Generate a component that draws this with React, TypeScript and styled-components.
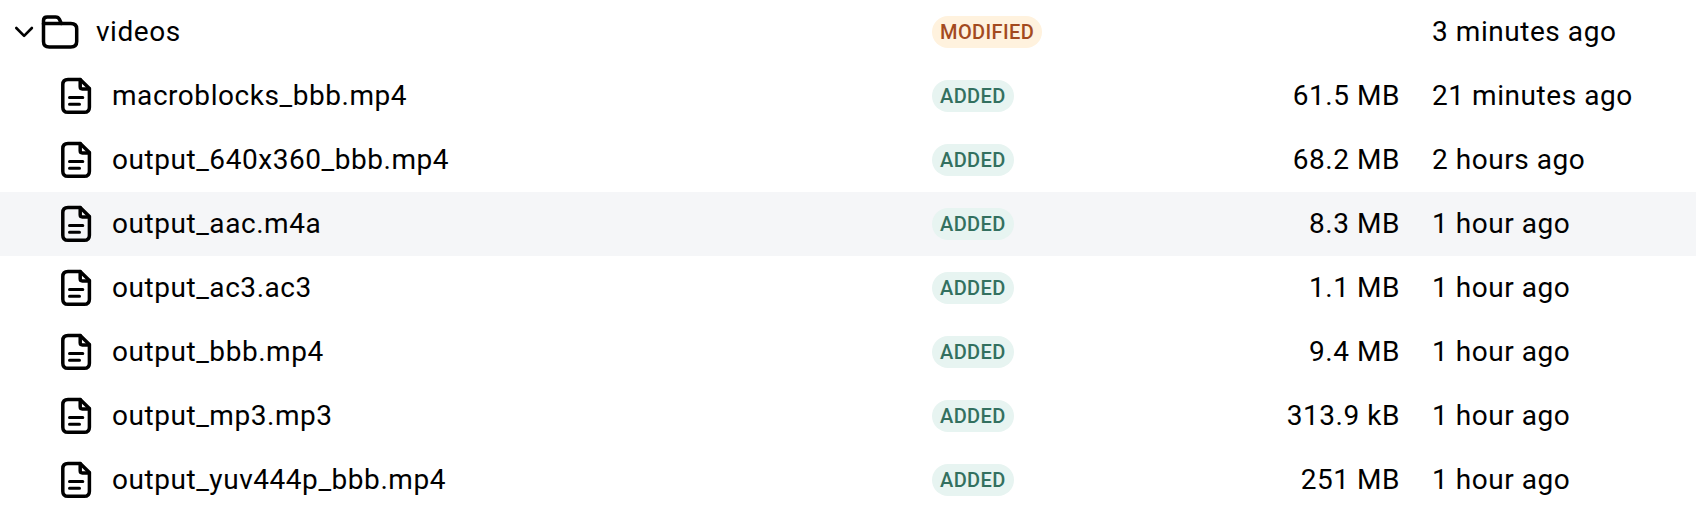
import React from "react";
import styled, { createGlobalStyle, css } from "styled-components";

const GlobalStyle = createGlobalStyle`
  html, body { margin: 0; padding: 0; background: #fff; }
`;

const Tree = styled.main`
  width: 100%;
  height: 516px;
  overflow: hidden;
  color: #000;
  background: #fff;
  font: 400 28px/64px Roboto, sans-serif;
  letter-spacing: 0.55px;
`;

const Row = styled.div<{ $active?: boolean }>`
  display: grid;
  grid-template-columns: 932px 268px 200px 1fr;
  height: 64px;
  align-items: center;
  white-space: nowrap;
  background: ${(p) => (p.$active ? "#f5f6f8" : "transparent")};
`;

const NameCell = styled.div<{ $nested?: boolean }>`
  display: flex;
  align-items: center;
  height: 64px;
  padding-left: ${(p) => (p.$nested ? 56 : 8)}px;
`;

const Icon = styled.svg<{ $weight?: number }>`
  flex: none;
  display: block;
  fill: none;
  stroke: #000;
  stroke-width: ${(p) => p.$weight ?? 3.5};
  stroke-linecap: round;
  stroke-linejoin: round;
`;

const Label = styled.span`
  margin-left: 16px;
`;

const StatusCell = styled.div`
  display: flex;
`;

const tones = {
  modified: css`
    color: #a34a1f;
    background: #fff2de;
  `,
  added: css`
    color: #33705f;
    background: #e7f4f1;
  `,
};

const Badge = styled.span<{ $tone: keyof typeof tones }>`
  height: 32px;
  padding: 0 8px;
  border-radius: 16px;
  font-size: 20px;
  font-weight: 500;
  line-height: 32px;
  letter-spacing: 0.4px;
  text-transform: uppercase;
  ${(p) => tones[p.$tone]}
`;

const SizeCell = styled.div`
  text-align: right;
`;

const TimeCell = styled.div`
  padding-left: 32px;
`;

const Chevron = () => (
  <Icon width="32" height="64" viewBox="0 0 32 64" $weight={2.6}>
    <path d="M8.3 28l7.8 7.900 7.800-7.900" />
  </Icon>
);

const Folder = () => (
  <Icon width="40" height="64" viewBox="0 0 40 64">
    <path d="M3.500 24V20.500Q3.500 16.900 7.300 16.900H15.500Q18.300 16.900 19.400 19.300L21.300 23.400" />
    <path d="M3.500 23.400H30.800Q36.700 23.400 36.700 28.700V41.500Q36.700 46.900 30.800 46.900H9.300Q3.500 46.900 3.500 41.500Z" />
  </Icon>
);

const FileText = () => (
  <Icon width="40" height="64" viewBox="0 0 40 64">
    <path d="M24.200 15.400H12Q6.800 15.400 6.800 20.500V43.200Q6.800 48.300 12 48.300H28.200Q33.400 48.300 33.400 43.200V24.400Z" />
    <path d="M24.200 15.400V22.800Q24.200 24.900 26.300 24.900H33.400" />
    <path d="M13.500 33.600H26.800M13.500 40.300H23.500" strokeWidth="3" />
  </Icon>
);

interface Entry {
  name: string;
  size: string;
  time: string;
  active?: boolean;
}

const files: Entry[] = [
  { name: "macroblocks_bbb.mp4", size: "61.5 MB", time: "21 minutes ago" },
  { name: "output_640x360_bbb.mp4", size: "68.2 MB", time: "2 hours ago" },
  { name: "output_aac.m4a", size: "8.3 MB", time: "1 hour ago", active: true },
  { name: "output_ac3.ac3", size: "1.1 MB", time: "1 hour ago" },
  { name: "output_bbb.mp4", size: "9.4 MB", time: "1 hour ago" },
  { name: "output_mp3.mp3", size: "313.9 kB", time: "1 hour ago" },
  { name: "output_yuv444p_bbb.mp4", size: "251 MB", time: "1 hour ago" },
];

export default function App() {
  return (
    <>
      <GlobalStyle />
      <Tree>
        <Row>
          <NameCell>
            <Chevron />
            <Folder />
            <Label>videos</Label>
          </NameCell>
          <StatusCell>
            <Badge $tone="modified">Modified</Badge>
          </StatusCell>
          <SizeCell />
          <TimeCell>3 minutes ago</TimeCell>
        </Row>
        {files.map((file) => (
          <Row key={file.name} $active={file.active}>
            <NameCell $nested>
              <FileText />
              <Label>{file.name}</Label>
            </NameCell>
            <StatusCell>
              <Badge $tone="added">Added</Badge>
            </StatusCell>
            <SizeCell>{file.size}</SizeCell>
            <TimeCell>{file.time}</TimeCell>
          </Row>
        ))}
      </Tree>
    </>
  );
}
